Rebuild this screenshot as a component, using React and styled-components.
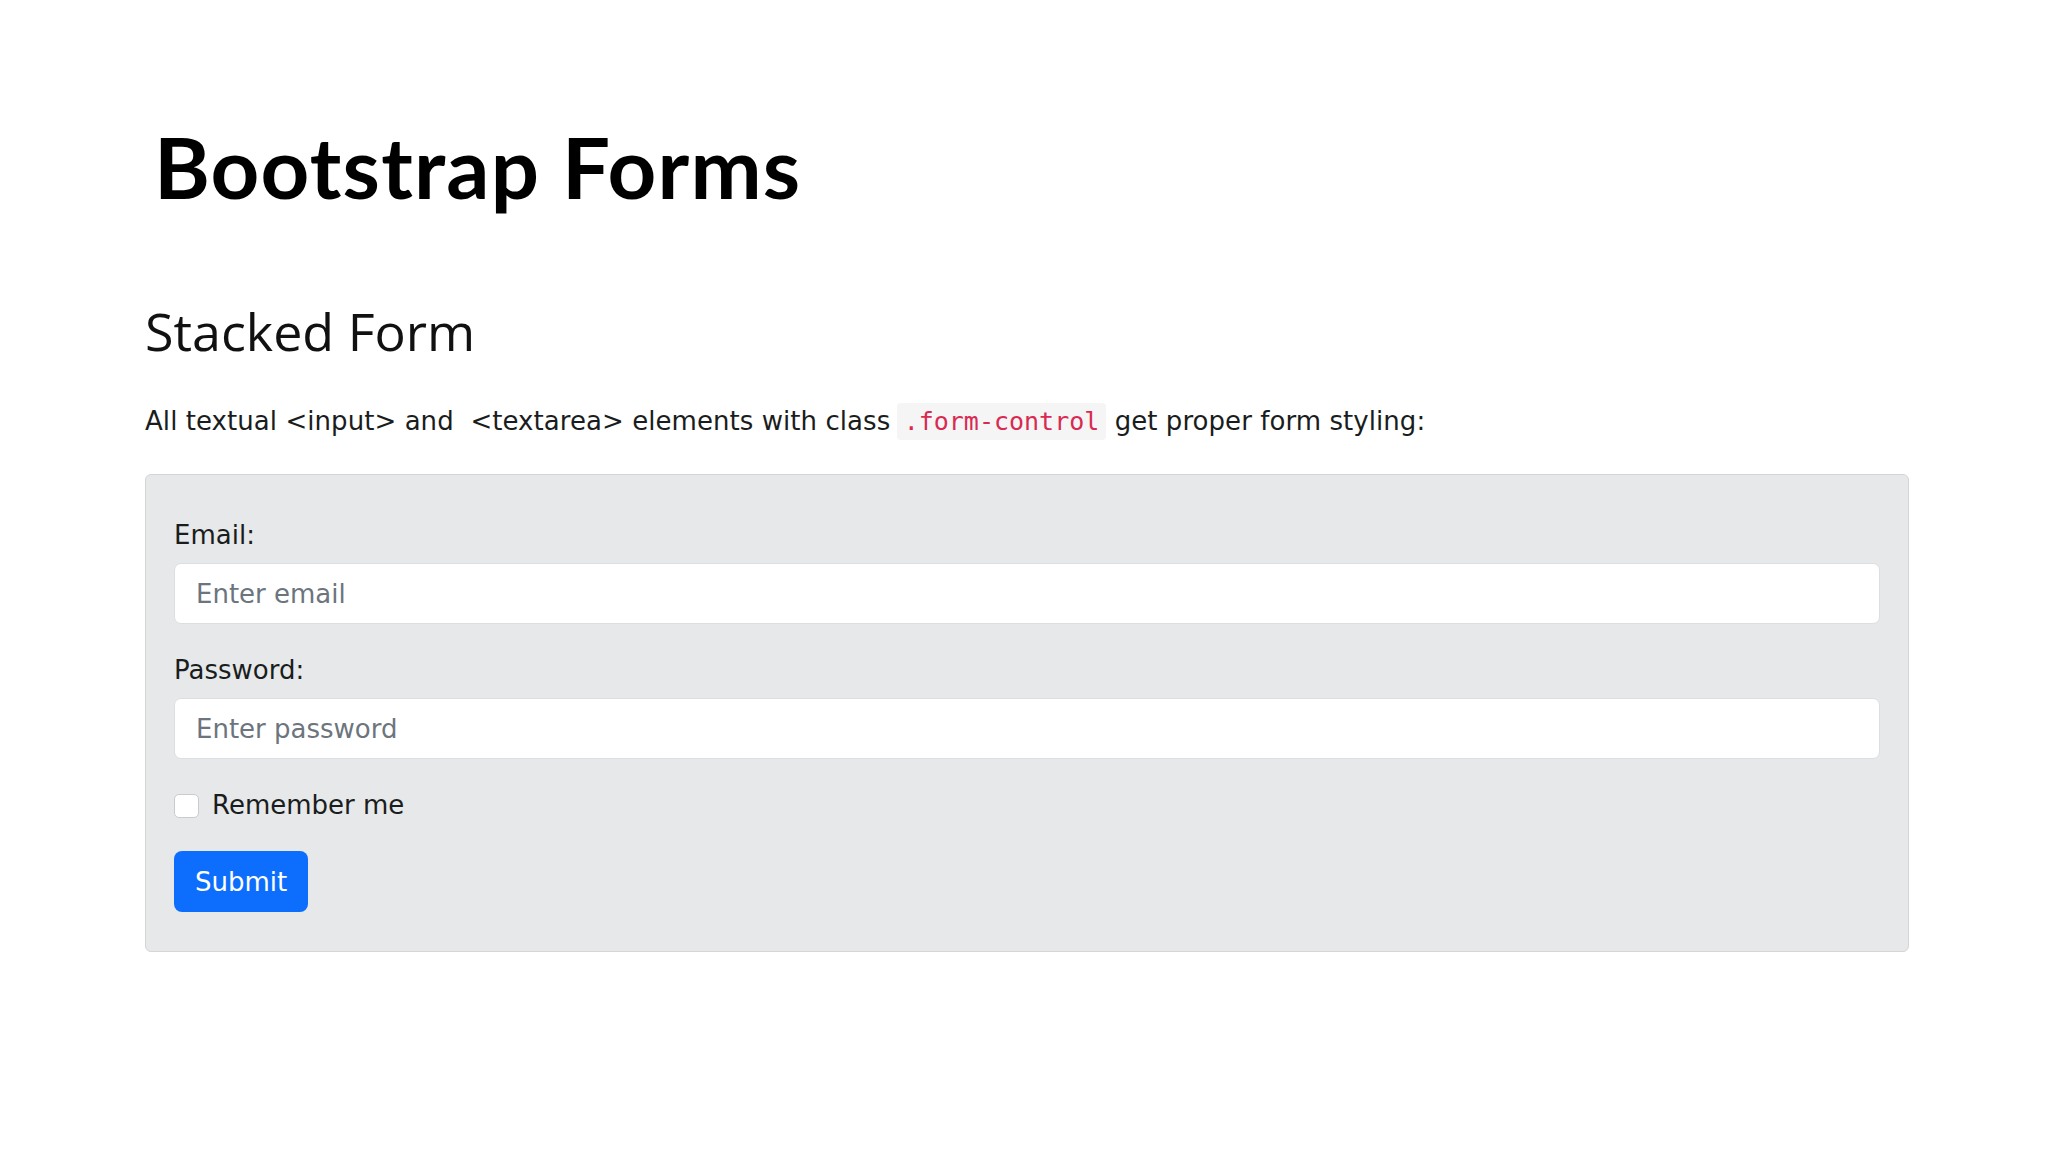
import React from "react";
import styled, { createGlobalStyle } from "styled-components";

const GlobalStyle = createGlobalStyle`
  body {
    margin: 0;
    background: #fff;
  }
`;

const Page = styled.div`
  padding: 124px 0 80px 145px;
  color: #212529;
  font-family: "DejaVu Sans", Verdana, sans-serif;
`;

const Title = styled.h1`
  margin: 0 0 0 9px;
  font-family: Lato, "Open Sans", sans-serif;
  font-weight: 700;
  font-size: 85px;
  line-height: 84px;
  letter-spacing: 1.2px;
  color: #000;
`;

const Heading = styled.h2`
  margin: 92px 0 0;
  font-family: "Open Sans", sans-serif;
  font-weight: 400;
  font-size: 52px;
  line-height: 62px;
  color: #111;
`;

const Lead = styled.p`
  margin: 40px 0 0;
  font-size: 26px;
  line-height: 39px;
  letter-spacing: 0.06px;
  color: #1a1d20;
`;

const Code = styled.code`
  margin-left: -2px;
  padding: 4px 7px;
  border-radius: 4px;
  background: #f5f5f6;
  color: #d92a52;
  font-family: "DejaVu Sans Mono", "Liberation Mono", monospace;
  font-size: 25px;
  letter-spacing: 0;
`;

const FormPanel = styled.form`
  box-sizing: border-box;
  width: 1764px;
  margin-top: 33px;
  padding: 41px 28px 39px;
  background: #e7e8e9;
  border: 1px solid #d4d5d6;
  border-radius: 6px;
`;

const Field = styled.div`
  margin-bottom: 27px;
`;

const Label = styled.label`
  display: block;
  margin-bottom: 8px;
  font-size: 26px;
  line-height: 39px;
  color: #1a1d20;
`;

const TextInput = styled.input`
  display: block;
  box-sizing: border-box;
  width: 100%;
  height: 61px;
  padding: 0 21px;
  background: #fff;
  border: 1px solid #dcdfe2;
  border-radius: 7px;
  font-family: inherit;
  font-size: 26px;
  color: #212529;
  outline: none;

  &::placeholder {
    color: #6c757d;
  }
`;

const CheckRow = styled.label`
  display: flex;
  align-items: center;
  gap: 13px;
  margin-bottom: 26px;
  font-size: 26px;
  line-height: 39px;
  color: #1a1d20;
`;

const CheckBox = styled.input`
  appearance: none;
  box-sizing: border-box;
  width: 25px;
  height: 24px;
  margin: 0;
  background: #fff;
  border: 1px solid #c9cbcd;
  border-radius: 5px;
`;

const SubmitButton = styled.button`
  display: block;
  height: 61px;
  padding: 2px 21px 0;
  background: #0d6efd;
  color: #fff;
  border: none;
  border-radius: 8px;
  font-family: inherit;
  font-size: 26px;
  line-height: 39px;
`;

const App = () => (
  <>
    <GlobalStyle />
    <Page>
      <Title>Bootstrap Forms</Title>
      <Heading>Stacked Form</Heading>
      <Lead>
        All textual &lt;input&gt; and{"\u00a0"} &lt;textarea&gt; elements with class{" "}
        <Code>.form-control</Code> get proper form styling:
      </Lead>
      <FormPanel onSubmit={e => e.preventDefault()}>
        <Field>
          <Label htmlFor="email">Email:</Label>
          <TextInput id="email" type="email" placeholder="Enter email" />
        </Field>
        <Field>
          <Label htmlFor="pwd">Password:</Label>
          <TextInput id="pwd" type="password" placeholder="Enter password" />
        </Field>
        <CheckRow>
          <CheckBox type="checkbox" />
          Remember me
        </CheckRow>
        <SubmitButton type="submit">Submit</SubmitButton>
      </FormPanel>
    </Page>
  </>
);

export default App;
